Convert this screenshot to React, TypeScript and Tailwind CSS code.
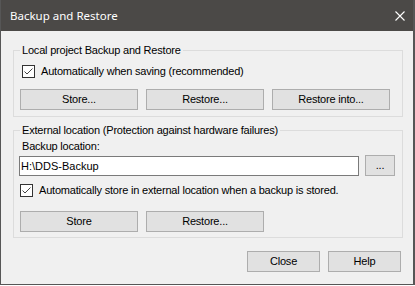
import React from 'react';

const font = { fontFamily: '"Liberation Sans", Arial, sans-serif' };

const Btn = ({ label, className = 'w-[118px]' }: { label: string; className?: string }) => (
    <button className={`${className} h-[21px] bg-[#e1e1e1] border border-[#adadad] text-[11px] leading-[13px] tracking-[-0.2px] text-black flex items-center justify-center`}>
        {label}
    </button>
);

const Check = ({ label, className = '' }: { label: string; className?: string }) => (
    <div className={`flex items-center gap-[6px] h-[13px] ${className}`}>
        <span className="w-[13px] h-[13px] border border-[#333] bg-white flex-shrink-0 flex items-center justify-center">
            <svg width="11" height="11" viewBox="0 0 11 11">
                <path d="M1.5 5.5 L4 8 L9.5 2.5" fill="none" stroke="#444" strokeWidth="1" />
            </svg>
        </span>
        <span className="text-[11px] leading-[13px] tracking-[-0.2px] text-black whitespace-nowrap">{label}</span>
    </div>
);

const App = () => {
    return (
        <div className="w-[415px] h-[286px] bg-white" style={font}>
            <div className="w-[415px] h-[285px] bg-[#f0f0f0] border-l border-r-2 border-b border-[#565656] flex flex-col">
                {/* Title bar */}
                <div className="h-[31px] bg-[#4b4947] flex items-center justify-between pl-[9px] pr-[8px] flex-shrink-0">
                    <span className="text-white text-[11.5px] leading-[16px]" style={{ fontFamily: '"Noto Sans", "Liberation Sans", sans-serif' }}>
                        Backup and Restore
                    </span>
                    <svg width="10" height="10" viewBox="0 0 10 10">
                        <path d="M0.5 0.5 L9.5 9.5 M9.5 0.5 L0.5 9.5" stroke="#fff" strokeWidth="1.1" />
                    </svg>
                </div>

                {/* Local project */}
                <fieldset className="ml-[12px] mt-[12px] w-[390px] border border-[#dcdcdc] pb-[6px] flex flex-col items-start">
                    <legend className="ml-[6px] px-[2px] text-[11px] leading-[14px] tracking-[-0.2px] text-black">Local project Backup and Restore</legend>
                    <Check label="Automatically when saving (recommended)" className="ml-[8px] mt-[8px]" />
                    <div className="ml-[6px] mt-[11px] flex gap-[8px]">
                        <Btn label="Store..." />
                        <Btn label="Restore..." />
                        <Btn label="Restore into..." />
                    </div>
                </fieldset>

                {/* External location */}
                <fieldset className="ml-[12px] mt-[6px] w-[390px] border border-[#dcdcdc] pb-[5px] flex flex-col items-start">
                    <legend className="ml-[6px] px-[2px] text-[11px] leading-[14px] tracking-[-0.2px] text-black">External location (Protection against hardware failures)</legend>
                    <div className="ml-[8px] mt-[3px] text-[11px] leading-[13px] tracking-[-0.2px] text-black">Backup location:</div>
                    <div className="ml-[5px] mt-[2px] flex items-start gap-[6px]">
                        <div className="mt-[1px] w-[340px] h-[20px] bg-white border border-[#7a7a7a] flex items-center pl-[1px] text-[11px] leading-[13px] text-black">
                            H:\DDS-Backup
                        </div>
                        <Btn label="..." className="w-[30px]" />
                    </div>
                    <Check label="Automatically store in external location when a backup is stored." className="ml-[6px] mt-[8px]" />
                    <div className="ml-[6px] mt-[14px] flex gap-[8px]">
                        <Btn label="Store" />
                        <Btn label="Restore..." />
                    </div>
                </fieldset>

                {/* Footer */}
                <div className="mt-[13px] pr-[12px] flex justify-end gap-[8px]">
                    <Btn label="Close" className="w-[73px]" />
                    <Btn label="Help" className="w-[73px]" />
                </div>
            </div>
        </div>
    );
};

export default App;
